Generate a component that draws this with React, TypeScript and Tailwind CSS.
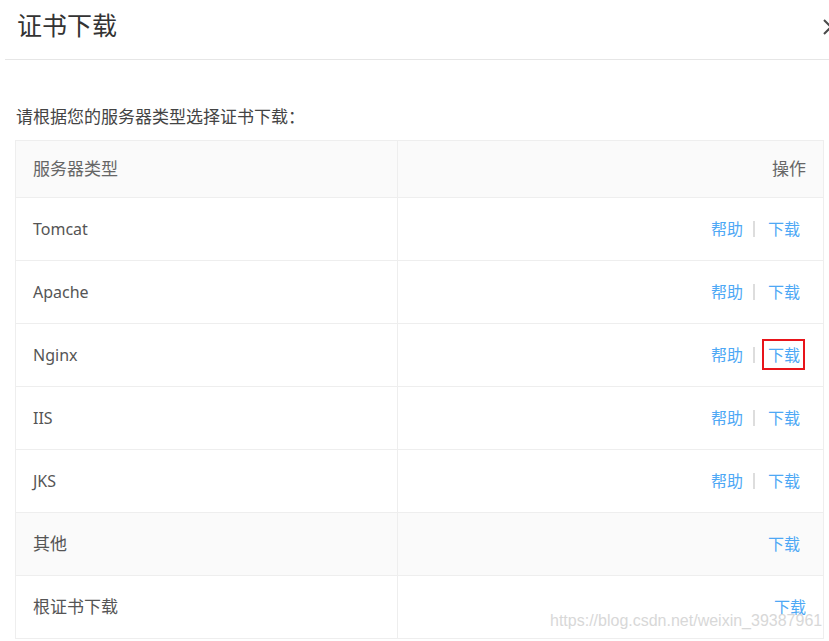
import React from 'react'

type Row = {
  name: string
  help: boolean
  gray?: boolean
  marked?: boolean
  tight?: boolean
  cjk?: boolean
}

const rows: Row[] = [
  { name: 'Tomcat', help: true },
  { name: 'Apache', help: true },
  { name: 'Nginx', help: true, marked: true },
  { name: 'IIS', help: true },
  { name: 'JKS', help: true },
  { name: '其他', help: false, gray: true, cjk: true },
  { name: '根证书下载', help: false, tight: true, cjk: true },
]

const font = { fontFamily: '"Noto Sans", "Noto Sans CJK SC", sans-serif' }

export default function App() {
  return (
    <div className="relative w-[829px] h-[641px] overflow-hidden bg-white" style={font}>
      {/* header */}
      <div className="relative ml-[5px] h-[60px] border-b border-[#e6e6e6] pl-[12px] flex items-center">
        <span className="text-[25px] leading-[30px] text-[#333] -mt-[10px]">证书下载</span>
        <svg className="absolute left-[817px] top-[18px]" width="18" height="18" viewBox="0 0 18 18">
          <path d="M2 2 L16 16 M16 2 L2 16" stroke="#4a4a4a" strokeWidth="2" fill="none" />
        </svg>
      </div>

      <div className="pt-[45px] pl-[16px] h-[69px]">
        <p className="text-[17px] leading-[24px] text-[#444]">请根据您的服务器类型选择证书下载：</p>
      </div>

      {/* table */}
      <div className="ml-[15px] mt-[11px] w-[809px] border-l border-r border-t border-[#eeeeee]">
        <div className="flex h-[57px] border-b border-[#eeeeee] bg-[#fafafa] text-[17px] text-[#666]">
          <div className="w-[382px] border-r border-[#eeeeee] pl-[17px] flex items-center">服务器类型</div>
          <div className="flex-1 pr-[17px] flex items-center justify-end">操作</div>
        </div>
        {rows.map((r) => (
          <div
            key={r.name}
            className={`flex h-[63px] border-b border-[#eeeeee] text-[16px] ${r.gray ? 'bg-[#fafafa]' : 'bg-white'}`}
          >
            <div className={`w-[382px] border-r border-[#eeeeee] pl-[17px] flex items-center text-[#555] ${r.cjk ? 'text-[17px]' : ''}`}>
              {r.name}
            </div>
            <div className={`flex-1 flex items-center justify-end text-[#4ea8f5] ${r.tight ? 'pr-[17px]' : 'pr-[23px]'}`}>
              {r.help && (
                <>
                  <span>帮助</span>
                  <span className="ml-[10px] mr-[13px] w-[2px] h-[16px] bg-[#dddddd]" />
                </>
              )}
              <span className="relative">
                下载
                {r.marked && (
                  <span className="absolute -left-[6px] -right-[5px] -top-[4px] -bottom-[3px] border-2 border-[#e8141a]" />
                )}
              </span>
            </div>
          </div>
        ))}
      </div>

      {/* watermark */}
      <div
        className="absolute left-[550px] top-[610px] text-[16px] leading-[22px] text-[#d8d8d8] whitespace-nowrap"
        style={{ fontFamily: '"Liberation Sans", Arial, sans-serif' }}
      >
        https://blog.csdn.net/weixin_39387961
      </div>
    </div>
  )
}
